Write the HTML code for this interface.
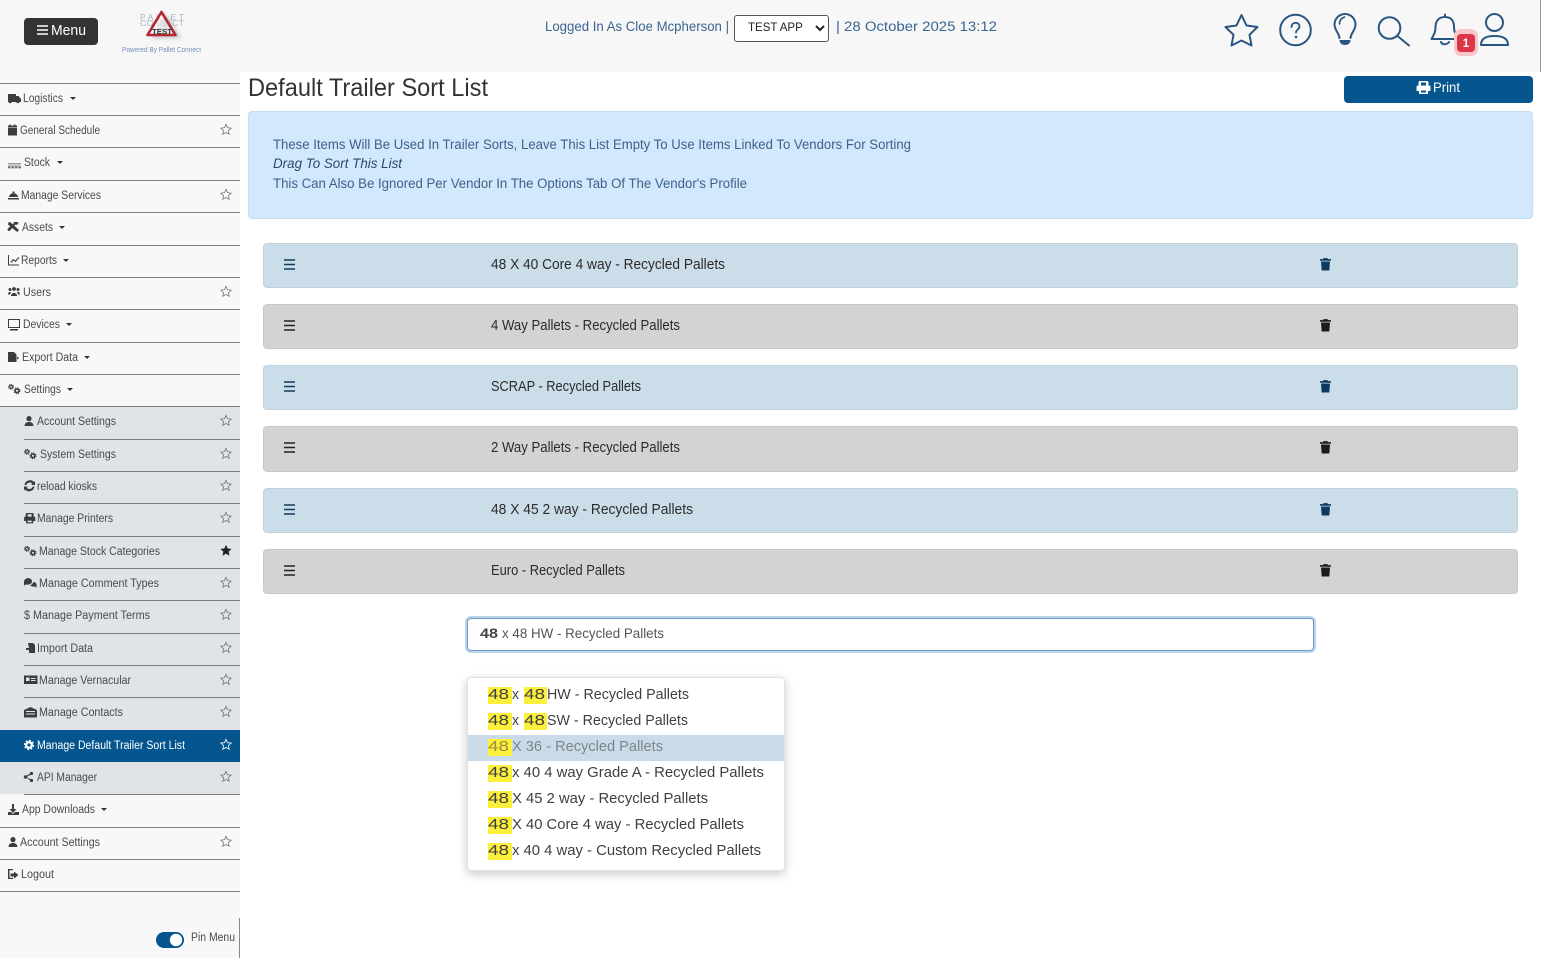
<!DOCTYPE html>
<html lang="en"><head><meta charset="utf-8"><title>Default Trailer Sort List</title>
<style>
html,body{margin:0;padding:0;background:#fff;width:1541px;height:958px;overflow:hidden;font-family:"Liberation Sans",sans-serif}
.a{position:absolute;box-sizing:border-box}
.l{position:absolute;height:1px;background:#7d7d7d;right:auto}
.row{position:absolute;left:263px;width:1255px;border-radius:4px;box-sizing:border-box}
.b{background:#cbdde9;border:1px solid #c0d2de}
.g{background:#d3d3d3;border:1px solid #c8c8c8}
svg text{font-family:"Liberation Sans",sans-serif}
.s text{font-size:11.5px;fill:#4a4a4a}
.m text{font-size:14.5px;fill:#2b2b2b}
.d text{font-size:15px;fill:#3f3f3f}
.i{fill:#3c3c3c}
</style></head><body>
<div class="a" style="left:0;top:0;width:1541px;height:72px;background:#f7f7f7"></div>
<div class="a" style="left:1540px;top:0;width:1px;height:72px;background:#999"></div>
<div class="a" style="left:0;top:72px;width:240px;height:886px;background:#f8f8f8"></div>
<div class="a" style="left:0;top:406px;width:240px;height:388px;background:#e0e4e8"></div>
<div class="a" style="left:0;top:730px;width:240px;height:32px;background:#05558f"></div>
<div class="a" style="left:239px;top:918px;width:1px;height:40px;background:#888"></div>

<div class="l" style="left:0;top:83px;width:240px"></div><div class="l" style="left:0;top:115px;width:240px"></div>
<div class="l" style="left:0;top:147px;width:240px"></div><div class="l" style="left:0;top:180px;width:240px"></div>
<div class="l" style="left:0;top:212px;width:240px"></div><div class="l" style="left:0;top:245px;width:240px"></div>
<div class="l" style="left:0;top:277px;width:240px"></div><div class="l" style="left:0;top:309px;width:240px"></div>
<div class="l" style="left:0;top:342px;width:240px"></div><div class="l" style="left:0;top:374px;width:240px"></div>
<div class="l" style="left:0;top:406px;width:240px"></div>
<div class="l" style="left:24px;top:439px;width:216px"></div><div class="l" style="left:24px;top:471px;width:216px"></div>
<div class="l" style="left:24px;top:503px;width:216px"></div><div class="l" style="left:24px;top:536px;width:216px"></div>
<div class="l" style="left:24px;top:568px;width:216px"></div><div class="l" style="left:24px;top:600px;width:216px"></div>
<div class="l" style="left:24px;top:633px;width:216px"></div><div class="l" style="left:24px;top:665px;width:216px"></div>
<div class="l" style="left:24px;top:697px;width:216px"></div><div class="l" style="left:24px;top:794px;width:216px"></div>
<div class="l" style="left:0;top:827px;width:240px"></div><div class="l" style="left:0;top:859px;width:240px"></div>
<div class="l" style="left:0;top:891px;width:240px"></div>

<div class="a" style="left:24px;top:18px;width:74px;height:27px;background:#333;border-radius:4px"></div>
<div class="a" style="left:1344px;top:76px;width:189px;height:27px;background:#05558f;border-radius:4px"></div>
<div class="a" style="left:248px;top:111px;width:1285px;height:108px;background:#d2e8fd;border:1px solid #c6dcf0;border-radius:4px"></div>

<div class="row b" style="top:243px;height:45px"></div>
<div class="row g" style="top:304px;height:45px"></div>
<div class="row b" style="top:365px;height:45px"></div>
<div class="row g" style="top:426px;height:46px"></div>
<div class="row b" style="top:488px;height:45px"></div>
<div class="row g" style="top:549px;height:45px"></div>

<div class="a" style="left:467px;top:618px;width:847px;height:33px;background:#fff;border:1px solid #6f9cc7;border-radius:4px;box-shadow:0 0 0 2px #bcd4ea"></div>
<div class="a" style="left:467px;top:677px;width:318px;height:194px;background:#fff;border-radius:4px;border:1px solid #e2e2e2;box-shadow:0 3px 10px rgba(0,0,0,.22)"></div>
<div class="a" style="left:468px;top:735px;width:316px;height:26px;background:#c9dbe8"></div>
<div class="a" style="left:488px;top:687px;width:24px;height:17px;background:#fdf03c"></div>
<div class="a" style="left:524px;top:687px;width:23px;height:17px;background:#fdf03c"></div>
<div class="a" style="left:488px;top:713px;width:24px;height:17px;background:#fdf03c"></div>
<div class="a" style="left:524px;top:713px;width:23px;height:17px;background:#fdf03c"></div>
<div class="a" style="left:488px;top:739px;width:24px;height:17px;background:#fdf03c"></div>
<div class="a" style="left:488px;top:765px;width:24px;height:17px;background:#fdf03c"></div>
<div class="a" style="left:488px;top:791px;width:24px;height:17px;background:#fdf03c"></div>
<div class="a" style="left:488px;top:817px;width:24px;height:17px;background:#fdf03c"></div>
<div class="a" style="left:488px;top:843px;width:24px;height:17px;background:#fdf03c"></div>

<select class="a" style="left:734px;top:15px;width:95px;height:27px;background:#fff;border:1px solid #555;border-radius:3px;font:11.5px 'Liberation Sans',sans-serif;color:#222;padding:0 0 2px 9px"><option>TEST APP</option></select>

<svg class="a" style="left:0;top:0" width="1541" height="958" viewBox="0 0 1541 958" xmlns="http://www.w3.org/2000/svg">
<defs>
<path id="st" d="M0-5.2 1.500-1.800 5.200-1.400 2.400 1.100 3.200 4.800 0 2.900 -3.200 4.800 -2.400 1.100 -5.200-1.400 -1.500-1.800Z"/>
<filter id="bl" x="-40%" y="-40%" width="180%" height="180%"><feGaussianBlur stdDeviation="2.200"/></filter>
<g id="cog" fill="none" stroke="#3c3c3c">
<circle cx="3" cy="2.800" r="1.500" stroke-width="1.200"/><circle cx="3" cy="2.800" r="2.500" stroke-width="1" stroke-dasharray="1 .95"/>
<circle cx="9" cy="6.800" r="1.800" stroke-width="1.500"/><circle cx="9" cy="6.800" r="3" stroke-width="1" stroke-dasharray="1.200 1.150"/>
</g>
<path id="ps" d="M5 0a2.600 2.600 0 1 1 0 5.200A2.600 2.600 0 0 1 5 0ZM.6 10c0-3 2-4 4.400-4s4.400 1 4.400 4Z"/>
<path id="tr" d="M3.500.6h4l.5 1h3v1.600H0V1.600h3ZM1 4h9l-.7 9H1.700Z"/>
<path id="cr" d="M0 0h6L3 3Z"/>
<path id="pr" fill-rule="evenodd" d="M2.500 0h8l1 1v3.500h.5a1.500 1.500 0 0 1 1.500 1.500v4H11v3H2v-3H-.5V6A1.500 1.500 0 0 1 1 4.500h.5V1ZM4 1.500v3h5v-3ZM4 9.500v2h5v-2Z"/>
</defs>

<!-- header -->
<g fill="none" stroke="#fff" stroke-width="1.500"><path d="M37 26h11M37 30h11M37 34h11"/></g>
<text x="51" y="35" font-size="15" fill="#fff" textLength="35" lengthAdjust="spacingAndGlyphs">Menu</text>

<text x="140" y="20" font-size="8.500" fill="#aab3bd" textLength="44" lengthAdjust="spacing">PALLET</text>
<text x="140" y="26" font-size="8.500" fill="#aab3bd" textLength="44" lengthAdjust="spacingAndGlyphs">CONNECT</text>
<path d="M151 38 165 14 181 38Z" fill="#888" opacity=".5" filter="url(#bl)"/>
<path d="M147.500 35 161.500 12 175.500 35Z" fill="rgba(255,255,255,.55)" stroke="#b5252f" stroke-width="2.600" stroke-linejoin="round"/>
<text x="152" y="34" font-size="7" font-weight="700" fill="#333" textLength="20" lengthAdjust="spacingAndGlyphs">TEST</text>
<text x="122" y="52" font-size="7" fill="#6f90b3" textLength="79" lengthAdjust="spacingAndGlyphs">Powered By Pallet Connect</text>

<text x="545" y="31" font-size="14" fill="#3a6590" textLength="184" lengthAdjust="spacingAndGlyphs">Logged In As Cloe Mcpherson |</text>
<text x="836" y="31" font-size="13.500" fill="#3a6590" textLength="161" lengthAdjust="spacingAndGlyphs">| 28 October 2025 13:12</text>

<g fill="none" stroke="#2a5580" stroke-width="2" stroke-linejoin="round" stroke-linecap="round">
<path d="M1241.500 15 1246.500 25.500 1257.500 27 1249.500 34.800 1251.500 45.500 1241.500 40.500 1231.500 45.500 1233.500 34.800 1225.500 27 1236.500 25.500Z"/>
<circle cx="1295.500" cy="30" r="15.300"/>
<path d="M1291.500 27c0-5.500 8-5.500 8-.5 0 3-3.500 3-3.500 6" stroke-width="1.800"/>
<path d="M1339.500 38c-.5-5-5-8-5-13.500a10.500 10.500 0 0 1 21 0c0 5.500-4.500 8.500-5 13.500"/>
<path d="M1339.500 24c0-4 2-6 5-7" stroke-width="1.600"/>
<circle cx="1389.500" cy="28" r="10.800"/>
<path d="M1397.500 36 1409 45.500"/>
<path d="M1445 14.500v2.500M1445 17c-7 0-9.500 5-9.500 10 0 6-2 8-4 12h27c-2-4-4.500-6-4.500-12 0-5-2-10-9-10ZM1441 42c1 3 6 3 8 0"/>
<circle cx="1494.500" cy="22.500" r="8.500"/>
<path d="M1481 45c0-6 4-9 13.500-9s13.500 3 13.500 9Z"/>
</g>
<circle cx="1296" cy="37" r="1.300" fill="#2a5580"/>
<path d="M1339.500 40h11c0 3-2 5-5.500 5s-5.500-2-5.500-5Z" fill="#2a5580"/>
<rect x="1454" y="29" width="24" height="27" rx="7" fill="#f6c6c9"/>
<rect x="1457" y="34" width="18" height="18" rx="4" fill="#dc3545"/>
<text x="1466" y="47" font-size="11.500" font-weight="700" fill="#fff" text-anchor="middle">1</text>

<!-- title -->
<text x="248" y="96" font-size="25" fill="#333" textLength="240" lengthAdjust="spacingAndGlyphs">Default Trailer Sort List</text>
<use href="#pr" x="1417" y="81" fill="#fff"/>
<text x="1433" y="92" font-size="14" fill="#fff" textLength="27" lengthAdjust="spacingAndGlyphs">Print</text>

<g font-size="13.500" fill="#3f6286">
<text x="273" y="149" textLength="638" lengthAdjust="spacingAndGlyphs">These Items Will Be Used In Trailer Sorts, Leave This List Empty To Use Items Linked To Vendors For Sorting</text>
<text x="273" y="168" font-style="italic" fill="#2c4a68" textLength="129" lengthAdjust="spacingAndGlyphs">Drag To Sort This List</text>
<text x="273" y="188" textLength="474" lengthAdjust="spacingAndGlyphs">This Can Also Be Ignored Per Vendor In The Options Tab Of The Vendor's Profile</text>
</g>

<!-- rows -->
<g class="m">
<text x="491" y="269" textLength="234" lengthAdjust="spacingAndGlyphs">48 X 40 Core 4 way - Recycled Pallets</text>
<text x="491" y="330" textLength="189" lengthAdjust="spacingAndGlyphs">4 Way Pallets - Recycled Pallets</text>
<text x="491" y="391" textLength="150" lengthAdjust="spacingAndGlyphs">SCRAP - Recycled Pallets</text>
<text x="491" y="452" textLength="189" lengthAdjust="spacingAndGlyphs">2 Way Pallets - Recycled Pallets</text>
<text x="491" y="514" textLength="202" lengthAdjust="spacingAndGlyphs">48 X 45 2 way - Recycled Pallets</text>
<text x="491" y="575" textLength="134" lengthAdjust="spacingAndGlyphs">Euro - Recycled Pallets</text>
</g>
<g stroke-width="1.600" fill="none">
<path stroke="#0f3a60" d="M284 260h11M284 264.500h11M284 269h11"/>
<path stroke="#222" d="M284 321h11M284 325.500h11M284 330h11"/>
<path stroke="#0f3a60" d="M284 382h11M284 386.500h11M284 391h11"/>
<path stroke="#222" d="M284 443h11M284 447.500h11M284 452h11"/>
<path stroke="#0f3a60" d="M284 505h11M284 509.500h11M284 514h11"/>
<path stroke="#222" d="M284 566h11M284 570.500h11M284 575h11"/>
</g>
<use href="#tr" x="1320" y="257.500" fill="#0f3a60"/>
<use href="#tr" x="1320" y="318.500" fill="#1c1c1c"/>
<use href="#tr" x="1320" y="379.500" fill="#0f3a60"/>
<use href="#tr" x="1320" y="440.500" fill="#1c1c1c"/>
<use href="#tr" x="1320" y="502.500" fill="#0f3a60"/>
<use href="#tr" x="1320" y="563.500" fill="#1c1c1c"/>

<!-- input -->
<text x="480" y="638" font-size="14" font-weight="700" fill="#444" textLength="18" lengthAdjust="spacingAndGlyphs">48</text>
<text x="502" y="638" font-size="14" fill="#555" textLength="162" lengthAdjust="spacingAndGlyphs">x 48 HW - Recycled Pallets</text>

<!-- dropdown -->
<g class="d">
<text x="488" y="699" textLength="21" lengthAdjust="spacingAndGlyphs">48</text><text x="512" y="699" textLength="7" lengthAdjust="spacingAndGlyphs">x</text><text x="524" y="699" textLength="21" lengthAdjust="spacingAndGlyphs">48</text><text x="547" y="699" textLength="142" lengthAdjust="spacingAndGlyphs">HW - Recycled Pallets</text>
<text x="488" y="725" textLength="21" lengthAdjust="spacingAndGlyphs">48</text><text x="512" y="725" textLength="7" lengthAdjust="spacingAndGlyphs">x</text><text x="524" y="725" textLength="21" lengthAdjust="spacingAndGlyphs">48</text><text x="547" y="725" textLength="141" lengthAdjust="spacingAndGlyphs">SW - Recycled Pallets</text>
<g opacity=".55"><text x="488" y="751" textLength="21" lengthAdjust="spacingAndGlyphs">48</text><text x="512" y="751" textLength="151" lengthAdjust="spacingAndGlyphs">X 36 - Recycled Pallets</text></g>
<text x="488" y="777" textLength="21" lengthAdjust="spacingAndGlyphs">48</text><text x="512" y="777" textLength="252" lengthAdjust="spacingAndGlyphs">x 40 4 way Grade A - Recycled Pallets</text>
<text x="488" y="803" textLength="21" lengthAdjust="spacingAndGlyphs">48</text><text x="512" y="803" textLength="196" lengthAdjust="spacingAndGlyphs">X 45 2 way - Recycled Pallets</text>
<text x="488" y="829" textLength="21" lengthAdjust="spacingAndGlyphs">48</text><text x="512" y="829" textLength="232" lengthAdjust="spacingAndGlyphs">X 40 Core 4 way - Recycled Pallets</text>
<text x="488" y="855" textLength="21" lengthAdjust="spacingAndGlyphs">48</text><text x="512" y="855" textLength="249" lengthAdjust="spacingAndGlyphs">x 40 4 way - Custom Recycled Pallets</text>
</g>

<!-- sidebar text -->
<g class="s">
<text x="23" y="102" textLength="40" lengthAdjust="spacingAndGlyphs">Logistics</text>
<text x="20" y="134" textLength="80" lengthAdjust="spacingAndGlyphs">General Schedule</text>
<text x="24" y="166" textLength="26" lengthAdjust="spacingAndGlyphs">Stock</text>
<text x="21" y="199" textLength="80" lengthAdjust="spacingAndGlyphs">Manage Services</text>
<text x="22" y="231" textLength="31" lengthAdjust="spacingAndGlyphs">Assets</text>
<text x="21" y="264" textLength="36" lengthAdjust="spacingAndGlyphs">Reports</text>
<text x="23" y="296" textLength="28" lengthAdjust="spacingAndGlyphs">Users</text>
<text x="23" y="328" textLength="37" lengthAdjust="spacingAndGlyphs">Devices</text>
<text x="22" y="361" textLength="56" lengthAdjust="spacingAndGlyphs">Export Data</text>
<text x="24" y="393" textLength="37" lengthAdjust="spacingAndGlyphs">Settings</text>
<text x="37" y="425" textLength="79" lengthAdjust="spacingAndGlyphs">Account Settings</text>
<text x="40" y="458" textLength="76" lengthAdjust="spacingAndGlyphs">System Settings</text>
<text x="37" y="490" textLength="60" lengthAdjust="spacingAndGlyphs">reload kiosks</text>
<text x="37" y="522" textLength="76" lengthAdjust="spacingAndGlyphs">Manage Printers</text>
<text x="39" y="555" textLength="121" lengthAdjust="spacingAndGlyphs">Manage Stock Categories</text>
<text x="39" y="587" textLength="120" lengthAdjust="spacingAndGlyphs">Manage Comment Types</text>
<text x="24" y="619" textLength="126" lengthAdjust="spacingAndGlyphs">$ Manage Payment Terms</text>
<text x="37" y="652" textLength="56" lengthAdjust="spacingAndGlyphs">Import Data</text>
<text x="39" y="684" textLength="92" lengthAdjust="spacingAndGlyphs">Manage Vernacular</text>
<text x="39" y="716" textLength="84" lengthAdjust="spacingAndGlyphs">Manage Contacts</text>
<text x="37" y="749" textLength="148" lengthAdjust="spacingAndGlyphs" style="fill:#fff">Manage Default Trailer Sort List</text>
<text x="37" y="781" textLength="60" lengthAdjust="spacingAndGlyphs">API Manager</text>
<text x="22" y="813" textLength="73" lengthAdjust="spacingAndGlyphs">App Downloads</text>
<text x="20" y="846" textLength="80" lengthAdjust="spacingAndGlyphs">Account Settings</text>
<text x="21" y="878" textLength="33" lengthAdjust="spacingAndGlyphs">Logout</text>
<text x="191" y="941" textLength="44" lengthAdjust="spacingAndGlyphs">Pin Menu</text>
</g>

<!-- carets -->
<g fill="#333">
<use href="#cr" x="70" y="97"/><use href="#cr" x="57" y="161"/><use href="#cr" x="59" y="226"/><use href="#cr" x="63" y="259"/><use href="#cr" x="66" y="323"/><use href="#cr" x="84" y="356"/><use href="#cr" x="67" y="388"/><use href="#cr" x="101" y="808"/>
</g>

<!-- stars -->
<g fill="none" stroke="#666" stroke-width=".7">
<use href="#st" x="226" y="129.500"/><use href="#st" x="226" y="194.500"/><use href="#st" x="226" y="291.500"/>
<use href="#st" x="226" y="420.500"/><use href="#st" x="226" y="453.500"/><use href="#st" x="226" y="485.500"/>
<use href="#st" x="226" y="517.500"/><use href="#st" x="226" y="582.500"/><use href="#st" x="226" y="614.500"/>
<use href="#st" x="226" y="647.500"/><use href="#st" x="226" y="679.500"/><use href="#st" x="226" y="711.500"/>
<use href="#st" x="226" y="776.500"/><use href="#st" x="226" y="841.500"/>
</g>
<use href="#st" x="226" y="550.500" fill="#222" stroke="#222" stroke-width=".5"/>
<use href="#st" x="226" y="744.500" fill="none" stroke="#fff" stroke-width=".8"/>

<!-- sidebar icons -->
<g class="i">
<path d="M8 94h8v2h2.500l2.500 3v3h-1.500a1.700 1.700 0 0 1-3.300 0h-4.400a1.700 1.700 0 0 1-3.300 0H8Z"/>
<path d="M8 128h9v7.500H8Zm1.500-3.500h1.300v2.500H9.500Zm4.500 0h1.300v2.500H14Zm-6 1h9v2H8Z"/>
<path d="M8 163.500h13v.8H8Zm0 2.200h13v.8H8Zm0 1.500h2.500v1H8Zm3.500 0h2.500v1h-2.500Zm3.500 0h2.500v1H15Zm3.500 0H21v1h-2.500Z"/>
<path d="M8 198h11v1.500H8Zm.8-1a4.800 4.800 0 0 1 9.400 0Zm3.700-5.500h2v1.500h-2Z"/>
<path d="M8.500 222.500 10 222l8.500 7.500a1.500 1.500 0 0 1-2 2L8 224.500Zm9-.5 1 1.500-2 1.500-1-.5-5.500 6a1.400 1.400 0 0 1-2-2l6-5.500-.5-1Z"/>
<path d="M8 255h1v9.500h10v1H8Zm2.500 7 2.500-3 2.500 1.500 3-3.500.8.600-3.600 4.400-2.500-1.500-2 2.500Z"/>
<circle cx="14" cy="289" r="1.900"/><circle cx="10" cy="289.500" r="1.500"/><circle cx="18" cy="289.500" r="1.500"/>
<path d="M11 296c0-4 6-4 6 0ZM8 294.500c0-2.500 2-3 3-2.500l-1 2.500ZM20 294.500c0-2.500-2-3-3-2.500l1 2.500Z"/>
<path d="M8 319h12v9H8Zm1 1v7h10v-7Zm1 9h8v1.500h-8Z" fill-rule="evenodd"/>
<path d="M8 352h6l2.500 2.500V362H8Zm9 4.500 2 1.500-2 1.500Z"/>
<use href="#cog" x="8" y="384"/>
<use href="#ps" x="24" y="416"/>
<use href="#cog" x="24" y="449"/>
<path d="M24.500 485a5.500 5.500 0 0 1 9.500-3l1-1v4h-4l1.300-1.300a3.500 3.500 0 0 0-6 1.300Zm10 1.500a5.500 5.500 0 0 1-9.500 3l-1 1v-4h4l-1.300 1.300a3.500 3.500 0 0 0 6-1.300Z"/>
<use href="#pr" transform="translate(24.500 513) scale(.8)"/>
<use href="#cog" x="24" y="546"/>
<path d="M24 582c0-5 8-5 8-.5 0 2.500-3 3.500-6 3l-2 1Zm9 0c3 0 4 2 3.500 3.500l.5 2-2.500-1c-2 .5-4-.5-4.500-1.500 2 0 3-1.500 3-3Z"/>
<path d="M28 643h5l2 2v8h-6v-3h-3v-2h3Z"/>
<path d="M24 675.500h13.500v8.500H24Zm2 2v3.500h3.500v-3.500Zm5 .5v1h4.500v-1Zm0 2v1h4.500v-1Z" fill-rule="evenodd"/>
<path d="M24 710l6.500-3 6.500 3v7.500H24Zm2 1v1h9v-1Zm0 2.500v1h9v-1Z" fill-rule="evenodd"/>
<g fill="none" stroke="#fff"><circle cx="29" cy="745" r="2.800" stroke-width="2.400"/><circle cx="29" cy="745" r="4.600" stroke-width="1.200" stroke-dasharray="1.800 1.800"/></g>
<path d="M25 776.500l6-3.500v1.500l-4.500 2.500 4.500 2.500v1.500Z"/><circle cx="25.500" cy="777" r="1.700"/><circle cx="31.500" cy="773.500" r="1.600"/><circle cx="31.500" cy="780.500" r="1.600"/>
<path d="M12 804h2v5h2.500l-3.500 4-3.500-4H12ZM8 812h3l2 2 2-2h4v3H8Z"/>
<use href="#ps" x="8" y="837"/>
<path d="M13 869v1.200h-3.500v7.600H13V879H8v-10Zm1 2.500 4.500 3.500-4.500 3.500v-2h-3.500v-3H14Z"/>
</g>

<!-- toggle -->
<rect x="156" y="932" width="28" height="16" rx="8" fill="#05558f"/>
<circle cx="176" cy="940" r="6.200" fill="#fff"/>
</svg>
</body></html>
